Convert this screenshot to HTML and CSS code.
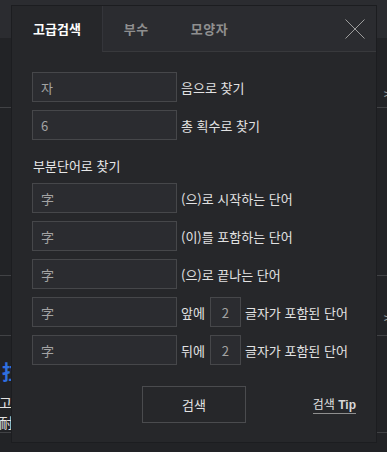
FILE: index.html
```html
<!DOCTYPE html>
<html lang="ko">
<head>
  <meta charset="UTF-8">
  <title>고급검색</title>
  <link rel="stylesheet" href="styles.css">
</head>
<body>
  <div class="page">
    <div class="page-top"></div>
    <div class="page-list">
      <div class="list-item item-a"><span class="more">&gt;</span></div>
      <div class="list-item item-b"></div>
      <div class="list-item item-c"><span class="more">&gt;</span></div>
      <div class="list-item item-d">
        <div class="hanja">拉</div>
        <div class="meaning">고</div>
        <div class="meaning">耐</div>
      </div>
    </div>
  </div>

  <div class="dialog">
    <div class="tabs">
      <div class="tab active">고급검색</div>
      <div class="tab-rest">
        <div class="tab">부수</div>
        <div class="tab">모양자</div>
        <button class="close" aria-label="닫기">
          <svg width="20" height="20" viewBox="0 0 20 20">
            <path d="M0.5 0.5 L19.5 19.5 M19.5 0.5 L0.5 19.5" stroke="#9c9c9c" stroke-width="1" fill="none"/>
          </svg>
        </button>
      </div>
    </div>

    <div class="body">
      <div class="group">
        <div class="row">
          <input class="field" type="text" value="자">
          <span class="label">음으로 찾기</span>
        </div>
        <div class="row">
          <input class="field" type="text" value="6">
          <span class="label">총 획수로 찾기</span>
        </div>
      </div>

      <h3 class="heading">부분단어로 찾기</h3>
      <div class="group">
        <div class="row">
          <input class="field" type="text" value="字">
          <span class="label">(으)로 시작하는 단어</span>
        </div>
        <div class="row">
          <input class="field" type="text" value="字">
          <span class="label">(이)를 포함하는 단어</span>
        </div>
        <div class="row">
          <input class="field" type="text" value="字">
          <span class="label">(으)로 끝나는 단어</span>
        </div>
        <div class="row">
          <input class="field" type="text" value="字">
          <span class="label">앞에</span>
          <input class="field small" type="text" value="2">
          <span class="label">글자가 포함된 단어</span>
        </div>
        <div class="row">
          <input class="field" type="text" value="字">
          <span class="label">뒤에</span>
          <input class="field small" type="text" value="2">
          <span class="label">글자가 포함된 단어</span>
        </div>
      </div>

      <div class="footer">
        <span></span>
        <button class="search">검색</button>
        <a class="tip" href="#">검색 <b>Tip</b></a>
      </div>
    </div>
  </div>
</body>
</html>
```

FILE: styles.css
```css
body {
  margin: 0;
  background-color: #222326;
  font-family: 'Noto Sans CJK KR', 'Noto Sans', sans-serif;
  color: #e2e2e2;
  overflow: hidden;
}
.page {
  width: 387px;
  height: 452px;
}
.page-top {
  height: 38px;
  background-color: #2b2c30;
}
.list-item {
  border-bottom: 1px solid #414245;
  position: relative;
}
.item-a { height: 69px; }
.item-b { height: 167px; }
.item-c { height: 59px; }
.item-d {
  padding: 24px 0 0 0;
}
.more {
  position: absolute;
  right: -4px;
  top: 46px;
  color: #a0a0a0;
  font-size: 13px;
}
.item-c .more {
  top: 32px;
}
.hanja {
  color: #2f6fe0;
  font-size: 20px;
  font-weight: bold;
  line-height: 24px;
  margin-left: 2px;
}
.meaning {
  font-size: 14px;
  line-height: 20px;
  margin-left: -1px;
}
.item-d .hanja + .meaning {
  margin-top: 8px;
}

.dialog {
  position: absolute;
  left: 11px;
  top: 5px;
  width: 364px;
  height: 436px;
  background-color: #26272a;
  border: 1px solid #1c1d20;
}
.tabs {
  display: flex;
  height: 46px;
}
.tab {
  padding: 0 21px;
  line-height: 46px;
  font-size: 13px;
  font-weight: bold;
  color: #8f8f8f;
}
.tab.active {
  color: #ffffff;
}
.tab-rest {
  flex: 1;
  display: flex;
  background-color: #2b2c30;
  border-left: 1px solid #34353a;
  border-bottom: 1px solid #38393c;
}
.tab-rest .tab {
  line-height: 45px;
  letter-spacing: 0.5px;
}
.close {
  margin: 13px 11px 0 auto;
  width: 20px;
  height: 20px;
  padding: 0;
  border: none;
  background: none;
}
.close svg {
  display: block;
}

.body {
  padding: 20px 20px 0 20px;
}
.group {
  display: flex;
  flex-direction: column;
  gap: 8px;
}
.row {
  display: flex;
  align-items: center;
  gap: 4px;
}
.field {
  box-sizing: border-box;
  width: 145px;
  height: 30px;
  margin: 0;
  padding: 0 8px;
  background-color: #2b2c30;
  border: 1px solid #46474a;
  color: #a3a3a3;
  font-family: 'Noto Sans CJK KR', 'Noto Sans', sans-serif;
  font-size: 13px;
  outline: none;
}
.field.small {
  width: 31px;
  padding: 0;
  text-align: center;
  margin-left: 1px;
}
.label {
  font-size: 13px;
  color: #e2e2e2;
  white-space: nowrap;
}
.heading {
  margin: 17px 0 8px 1px;
  font-size: 13px;
  font-weight: normal;
  line-height: 18px;
  color: #e8e8e8;
}
.footer {
  display: grid;
  grid-template-columns: 1fr auto 1fr;
  align-items: center;
  margin-top: 21px;
}
.search {
  width: 104px;
  height: 37px;
  background: none;
  border: 1px solid #4a4b4e;
  color: #e2e2e2;
  font-family: 'Noto Sans CJK KR', 'Noto Sans', sans-serif;
  font-size: 13px;
}
.tip {
  justify-self: end;
  font-size: 12px;
  color: #e2e2e2;
  text-decoration: none;
  border-bottom: 1px solid #8f8f8f;
  line-height: 15px;
}
.tip b {
  font-family: 'Liberation Sans', Arial, sans-serif;
  font-weight: bold;
  color: #d8d8d8;
}
```
